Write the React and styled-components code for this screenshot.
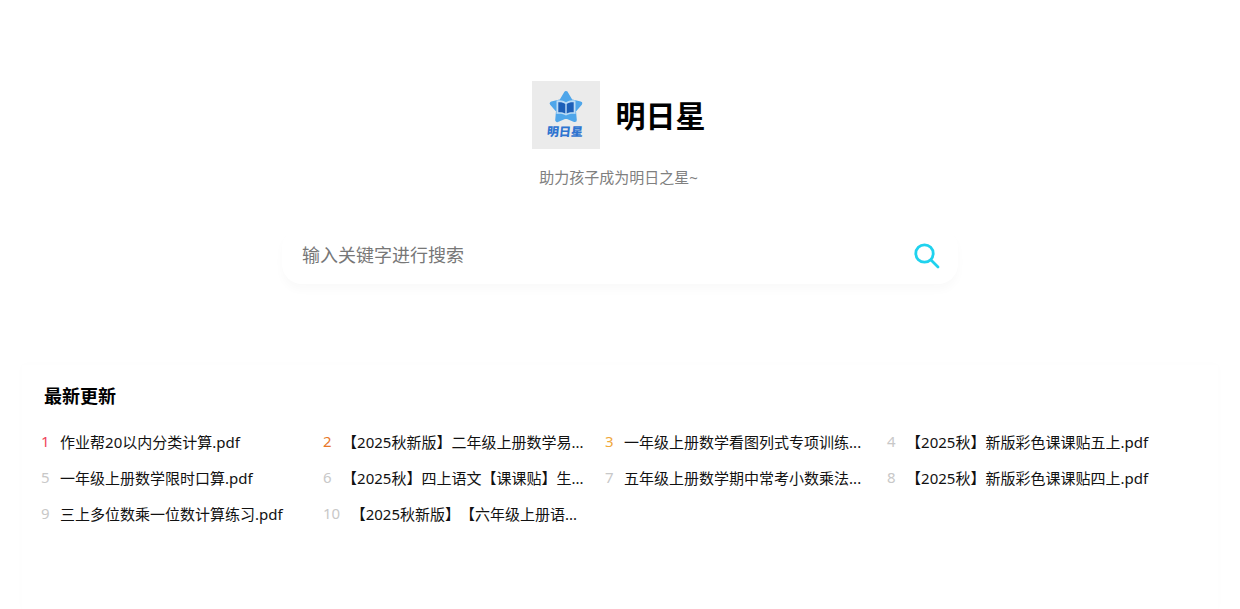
import React from 'react'
import styled, { createGlobalStyle } from 'styled-components'

const GlobalStyle = createGlobalStyle`
  html, body {
    margin: 0;
    padding: 0;
    background: #fff;
    font-family: "Noto Sans", "Noto Sans CJK SC", sans-serif;
    text-spacing-trim: space-all;
  }
`

const Page = styled.div`
  width: 1240px;
  height: 609px;
  overflow: hidden;
  display: flex;
  flex-direction: column;
  align-items: center;
`

const Brand = styled.div`
  display: flex;
  align-items: center;
  gap: 16px;
  margin-top: 81px;
  margin-right: 3px;
`

const Logo = styled.div`
  width: 68px;
  height: 68px;
  background: #ebebeb;
  display: flex;
  flex-direction: column;
  align-items: center;
  padding-top: 8px;
  box-sizing: border-box;
`

const LogoName = styled.span`
  font-size: 12px;
  line-height: 12px;
  font-weight: 900;
  color: #2f74d0;
  margin-top: 3px;
  transform: skewX(-6deg);
`

const Title = styled.h1`
  margin: 2px 0 0;
  font-size: 30px;
  line-height: 40px;
  font-weight: 700;
  color: #000;
`

const Slogan = styled.p`
  margin: 18px 3px 0 0;
  font-size: 15px;
  line-height: 20px;
  color: #808080;
`

const SearchBar = styled.div`
  width: 676px;
  height: 56px;
  margin-top: 41px;
  padding: 0 18px 0 20px;
  box-sizing: border-box;
  display: flex;
  align-items: center;
  justify-content: space-between;
  border-radius: 20px;
  background: #fff;
  box-shadow: 0 6px 10px rgba(0, 0, 0, 0.022);
`

const SearchHint = styled.span`
  font-size: 18px;
  line-height: 22px;
  margin-top: -3px;
  color: #777;
`

const Latest = styled.section`
  width: 1196px;
  flex: 1;
  margin-top: 81px;
  padding: 18px 0 0 19px;
  box-sizing: border-box;
  box-shadow: 0 0 8px rgba(0, 0, 0, 0.016);
`

const LatestTitle = styled.h2`
  margin: 0 0 0 3px;
  font-size: 18px;
  line-height: 26px;
  font-weight: 700;
  color: #000;
`

const FileGrid = styled.ol`
  list-style: none;
  margin: 14px 0 0;
  padding: 0;
  display: grid;
  grid-template-columns: repeat(4, 282px);
  grid-auto-rows: 36px;
`

const FileItem = styled.li`
  display: flex;
  align-items: center;
  font-size: 15px;
  white-space: nowrap;
  color: #111;
`

const Rank = styled.span`
  margin-right: 10.500px;
  color: ${(props) => props.color};
`

const rankColors = ['#f0465a', '#e8782a', '#f0a83c']

const files = [
  '作业帮20以内分类计算.pdf',
  '【2025秋新版】二年级上册数学易...',
  '一年级上册数学看图列式专项训练...',
  '【2025秋】新版彩色课课贴五上.pdf',
  '一年级上册数学限时口算.pdf',
  '【2025秋】四上语文【课课贴】生...',
  '五年级上册数学期中常考小数乘法...',
  '【2025秋】新版彩色课课贴四上.pdf',
  '三上多位数乘一位数计算练习.pdf',
  '【2025秋新版】【六年级上册语...',
]

const StarLogo = () => (
  <svg width="36" height="34" viewBox="0 0 36 34">
    <polygon
      points="18,4 22.9,12.3 32.300,14.400 26,21.800 26.800,31.100 18,27.500 9.200,31.100 10,21.800 3.700,14.400 13.100,12.300"
      fill="#4fa6ea"
      stroke="#4fa6ea"
      strokeWidth="4"
      strokeLinejoin="round"
    />
    <path d="M8.500 11.500c3.800-.6 7 0 9.500 1.800 2.500-1.800 5.700-2.400 9.500-1.800v13.500c-3.800-.5-7 0-9.500 1.500-2.500-1.500-5.700-2-9.500-1.500z" fill="#bcdcf6" />
    <path d="M10.300 13.300c2.800-.2 5.300.3 7 1.600v9.500c-2-1-4.200-1.400-7-1.200zM25.700 13.300c-2.800-.2-5.300.3-7 1.600v9.500c2-1 4.200-1.400 7-1.200z" fill="#1d5fb8" />
  </svg>
)

const SearchIcon = () => (
  <svg width="26" height="26" viewBox="0 0 26 26" fill="none" stroke="#1fd2ee" strokeWidth="2.800" strokeLinecap="round">
    <circle cx="10.500" cy="10.500" r="8.700" />
    <path d="M17 17l7 7" />
  </svg>
)

const App = () => (
  <Page>
    <GlobalStyle />
    <Brand>
      <Logo>
        <StarLogo />
        <LogoName>明日星</LogoName>
      </Logo>
      <Title>明日星</Title>
    </Brand>
    <Slogan>助力孩子成为明日之星~</Slogan>
    <SearchBar>
      <SearchHint>输入关键字进行搜索</SearchHint>
      <SearchIcon />
    </SearchBar>
    <Latest>
      <LatestTitle>最新更新</LatestTitle>
      <FileGrid>
        {files.map((name, i) => (
          <FileItem key={name}>
            <Rank color={rankColors[i] || '#c8c8c8'}>{i + 1}</Rank>
            {name}
          </FileItem>
        ))}
      </FileGrid>
    </Latest>
  </Page>
)

export default App
